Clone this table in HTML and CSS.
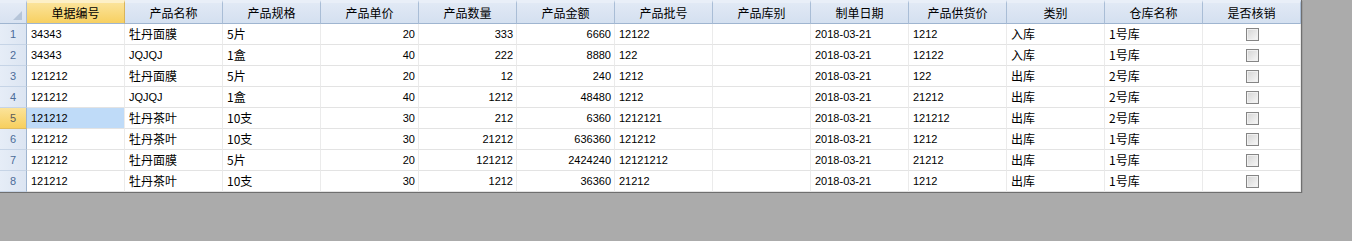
FILE: index.html
```html
<!DOCTYPE html>
<html lang="zh-CN">
<head>
<meta charset="utf-8">
<title>Grid</title>
<link rel="stylesheet" href="styles.css">
</head>
<body>
<div class="grid">
  <div class="hc corner"><span class="tri"></span></div>
  <div class="hc sel">单据编号</div>
  <div class="hc">产品名称</div>
  <div class="hc">产品规格</div>
  <div class="hc">产品单价</div>
  <div class="hc">产品数量</div>
  <div class="hc">产品金额</div>
  <div class="hc">产品批号</div>
  <div class="hc">产品库别</div>
  <div class="hc">制单日期</div>
  <div class="hc">产品供货价</div>
  <div class="hc">类别</div>
  <div class="hc">仓库名称</div>
  <div class="hc">是否核销</div>

  <div class="rh">1</div>
  <div class="c n">34343</div><div class="c">牡丹面膜</div><div class="c">5片</div><div class="c n r">20</div><div class="c n r">333</div><div class="c n r">6660</div><div class="c n">12122</div><div class="c"></div><div class="c n">2018-03-21</div><div class="c n">1212</div><div class="c">入库</div><div class="c">1号库</div><div class="c ck"><span class="box"></span></div>

  <div class="rh">2</div>
  <div class="c n">34343</div><div class="c n">JQJQJ</div><div class="c">1盒</div><div class="c n r">40</div><div class="c n r">222</div><div class="c n r">8880</div><div class="c n">122</div><div class="c"></div><div class="c n">2018-03-21</div><div class="c n">12122</div><div class="c">入库</div><div class="c">1号库</div><div class="c ck"><span class="box"></span></div>

  <div class="rh">3</div>
  <div class="c n">121212</div><div class="c">牡丹面膜</div><div class="c">5片</div><div class="c n r">20</div><div class="c n r">12</div><div class="c n r">240</div><div class="c n">1212</div><div class="c"></div><div class="c n">2018-03-21</div><div class="c n">122</div><div class="c">出库</div><div class="c">2号库</div><div class="c ck"><span class="box"></span></div>

  <div class="rh">4</div>
  <div class="c n">121212</div><div class="c n">JQJQJ</div><div class="c">1盒</div><div class="c n r">40</div><div class="c n r">1212</div><div class="c n r">48480</div><div class="c n">1212</div><div class="c"></div><div class="c n">2018-03-21</div><div class="c n">21212</div><div class="c">出库</div><div class="c">2号库</div><div class="c ck"><span class="box"></span></div>

  <div class="rh cur">5</div>
  <div class="c n active">121212</div><div class="c">牡丹茶叶</div><div class="c">10支</div><div class="c n r">30</div><div class="c n r">212</div><div class="c n r">6360</div><div class="c n">1212121</div><div class="c"></div><div class="c n">2018-03-21</div><div class="c n">121212</div><div class="c">出库</div><div class="c">2号库</div><div class="c ck"><span class="box"></span></div>

  <div class="rh">6</div>
  <div class="c n">121212</div><div class="c">牡丹茶叶</div><div class="c">10支</div><div class="c n r">30</div><div class="c n r">21212</div><div class="c n r">636360</div><div class="c n">121212</div><div class="c"></div><div class="c n">2018-03-21</div><div class="c n">1212</div><div class="c">出库</div><div class="c">1号库</div><div class="c ck"><span class="box"></span></div>

  <div class="rh">7</div>
  <div class="c n">121212</div><div class="c">牡丹面膜</div><div class="c">5片</div><div class="c n r">20</div><div class="c n r">121212</div><div class="c n r">2424240</div><div class="c n">12121212</div><div class="c"></div><div class="c n">2018-03-21</div><div class="c n">21212</div><div class="c">出库</div><div class="c">1号库</div><div class="c ck"><span class="box"></span></div>

  <div class="rh">8</div>
  <div class="c n">121212</div><div class="c">牡丹茶叶</div><div class="c">10支</div><div class="c n r">30</div><div class="c n r">1212</div><div class="c n r">36360</div><div class="c n">21212</div><div class="c"></div><div class="c n">2018-03-21</div><div class="c n">1212</div><div class="c">出库</div><div class="c">1号库</div><div class="c ck"><span class="box"></span></div>
</div>
</body>
</html>
```
FILE: styles.css
```css
html, body {
  margin: 0;
  padding: 0;
  background: #ababab;
}
body {
  font-family: "Liberation Sans", "Noto Sans CJK SC", sans-serif;
  font-size: 12px;
  color: #000;
}
.grid {
  display: grid;
  grid-template-columns: 27px repeat(13, 98px);
  grid-template-rows: 24px repeat(8, 21px);
  width: 1301px;
  background: #fff;
  border-right: 1px solid #6f6f6f;
  border-bottom: 1px solid #6f6f6f;
  box-shadow: 1px 1px 0 #9c9c9c;
}
.hc {
  box-sizing: border-box;
  border-right: 1px solid #a9bdd6;
  border-bottom: 1px solid #9fb5d0;
  border-top: 3px solid #e9eff8;
  background: linear-gradient(#e1e9f5, #d4e0f0);
  display: flex;
  align-items: center;
  justify-content: center;
  font-family: "Noto Sans CJK SC", sans-serif;
  font-size: 12px;
  line-height: 1;
  color: #000;
}
.hc.sel {
  background: linear-gradient(#fbe39a, #f7d061);
  border-top-color: #fdf0c8;
  border-right-color: #d9b45a;
}
.corner {
  justify-content: flex-end;
  align-items: flex-end;
  padding: 0 4px 3px 0;
  background: linear-gradient(#e4ebf6, #d8e2f1);
}
.tri {
  width: 9px;
  height: 9px;
  background: #b6c5d9;
  clip-path: polygon(100% 0, 100% 100%, 0 100%);
}
.rh {
  box-sizing: border-box;
  border-right: 1px solid #9fb5d0;
  border-bottom: 1px solid #c6d4e6;
  background: linear-gradient(90deg, #e6edf7, #dce5f2);
  display: flex;
  align-items: center;
  justify-content: center;
  font-size: 11px;
  color: #4c6c99;
}
.rh.cur {
  background: linear-gradient(#fbe39a, #f7cf5e);
  border-bottom-color: #e0bc60;
  color: #5b5b5b;
}
.c {
  box-sizing: border-box;
  border-right: 1px solid #ebebeb;
  border-bottom: 1px solid #e3e3e3;
  display: flex;
  align-items: center;
  padding: 0 3px 0 4px;
  white-space: nowrap;
  overflow: hidden;
  font-family: "Noto Sans CJK SC", sans-serif;
  font-size: 12px;
  line-height: 1;
}
.c.n {
  font-family: "Liberation Sans", sans-serif;
  font-size: 11px;
}
.c.r {
  justify-content: flex-end;
}
.c.active {
  background: #bfdbf8;
}
.c.ck {
  justify-content: center;
  padding: 0 0 0 1px;
}
.box {
  width: 11px;
  height: 11px;
  border: 1px solid #858585;
  background: linear-gradient(135deg, #d4d4d4, #f8f8f8);
  box-shadow: inset 0 0 0 1px #f0f0f0;
}
```
